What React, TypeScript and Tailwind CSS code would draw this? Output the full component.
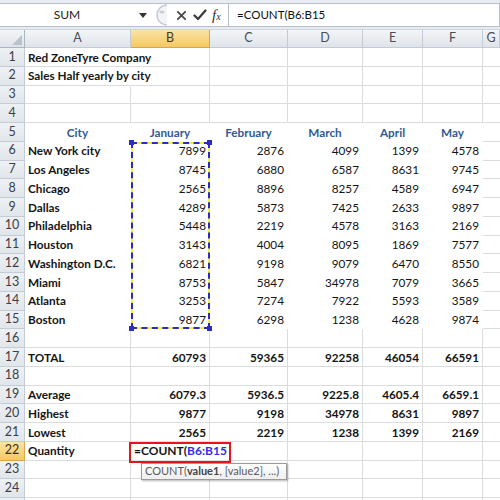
import * as React from 'react';

type Cell = {
  text?: string;
  bold?: boolean;
  align?: 'left' | 'right' | 'center';
  blue?: boolean;
};

const COLS = ['A', 'B', 'C', 'D', 'E', 'F', 'G'];

const cities: [string, number[]][] = [
  ['New York city', [7899, 2876, 4099, 1399, 4578]],
  ['Los Angeles', [8745, 6880, 6587, 8631, 9745]],
  ['Chicago', [2565, 8896, 8257, 4589, 6947]],
  ['Dallas', [4289, 5873, 7425, 2633, 9897]],
  ['Philadelphia', [5448, 2219, 4578, 3163, 2169]],
  ['Houston', [3143, 4004, 8095, 1869, 7577]],
  ['Washington D.C.', [6821, 9198, 9079, 6470, 8550]],
  ['Miami', [8753, 5847, 34978, 7079, 3665]],
  ['Atlanta', [3253, 7274, 7922, 5593, 3589]],
  ['Boston', [9877, 6298, 1238, 4628, 9874]],
];

const boldRow = (label: string, vals: string[]): Cell[] => [
  { text: label, bold: true },
  ...vals.map((v) => ({ text: v, bold: true, align: 'right' as const })),
];

const rows: Cell[][] = [
  [{ text: 'Red ZoneTyre Company', bold: true }],
  [{ text: 'Sales Half yearly by city', bold: true }],
  [],
  [],
  ['City', 'January', 'February', 'March', 'April', 'May'].map((t) => ({
    text: t,
    bold: true,
    align: 'center' as const,
    blue: true,
  })),
  ...cities.map(([city, vals]) => [
    { text: city, bold: true },
    ...vals.map((v) => ({ text: String(v), align: 'right' as const })),
  ]),
  [],
  boldRow('TOTAL', ['60793', '59365', '92258', '46054', '66591']),
  [],
  boldRow('Average', ['6079.3', '5936.5', '9225.8', '4605.4', '6659.1']),
  boldRow('Highest', ['9877', '9198', '34978', '8631', '9897']),
  boldRow('Lowest', ['2565', '2219', '1238', '1399', '2169']),
  [{ text: 'Quantity', bold: true }],
  [],
  [],
  [],
];

const isFilled = (r: number, c: number) => r >= 5 && r <= 15 && c <= 5;

function CrossIcon() {
  return (
    <svg width="11" height="11" viewBox="0 0 12 12">
      <path d="M2 2 L10 10 M10 2 L2 10" stroke="#4a4a4a" strokeWidth="2" strokeLinecap="round" />
    </svg>
  );
}

function CheckIcon() {
  return (
    <svg width="14" height="12" viewBox="0 0 14 12">
      <path d="M1.5 6.5 L5 10 L12.5 1.5" stroke="#3a3a3a" strokeWidth="2.2" fill="none" strokeLinecap="round" strokeLinejoin="round" />
    </svg>
  );
}

function FormulaBar() {
  return (
    <div className="flex h-[30px] bg-[#e8ebef] pt-[3px] pb-[3px] border-b border-[#cfd5dc]">
      <div className="flex h-[24px] w-[150px] items-center bg-white border-y border-[#b7c0ca]">
        <span className="w-[134px] text-center text-[12px] text-[#222]">SUM</span>
        <svg width="8" height="5" viewBox="0 0 8 5" className="ml-[5px]">
          <path d="M0 0 L8 0 L4 5 Z" fill="#333" />
        </svg>
      </div>
      <div className="flex h-[24px] w-[78px] items-center bg-white border-y border-[#b7c0ca]">
        <svg width="18" height="22" viewBox="0 0 18 22" className="ml-[1px]">
          <path d="M16 1 A10 10 0 0 0 16 21" stroke="#c6ccd3" strokeWidth="1.5" fill="#f2f4f6" />
          <ellipse cx="11" cy="8" rx="2.5" ry="1.6" fill="#c9ced5" />
        </svg>
        <span className="ml-[7px] flex"><CrossIcon /></span>
        <span className="ml-[6px] flex"><CheckIcon /></span>
        <span className="ml-[5px] font-['Liberation_Serif'] text-[15px] italic text-[#333] leading-none">
          f<span className="text-[10px]">x</span>
        </span>
      </div>
      <div className="flex h-[24px] flex-1 items-center border border-[#b7c0ca] bg-white pl-[8px] text-[11.5px] text-[#111]">
        =COUNT(B6:B15
      </div>
    </div>
  );
}

export default function App() {
  return (
    <div className="h-[500px] w-[500px] overflow-hidden bg-white font-['Lato','Liberation_Sans',sans-serif]">
      <FormulaBar />
      <div className="relative grid grid-cols-[25px_106px_79px_78px_75px_60px_60px_17px] grid-rows-[18px] auto-rows-[18.75px]">
        {/* corner */}
        <div className="relative border-r border-b border-[#aab5c2] bg-gradient-to-b from-[#f3f5f7] to-[#dfe4ea]">
          <svg width="10" height="10" viewBox="0 0 10 10" className="absolute bottom-[2px] right-[2px]">
            <path d="M10 0 L10 10 L0 10 Z" fill="#b9c1cb" />
          </svg>
        </div>
        {COLS.map((c) => (
          <div
            key={c}
            className={
              c === 'B'
                ? 'flex items-center justify-center border-r border-b border-[#d9a74a] bg-gradient-to-b from-[#fbe3a4] to-[#f4c95f] text-[12.5px] text-[#4a3b22]'
                : 'flex items-center justify-center border-r border-b border-[#c3ccd6] bg-gradient-to-b from-[#f3f5f7] to-[#dfe4ea] text-[12.5px] text-[#4a4f56]'
            }
          >
            {c}
          </div>
        ))}

        {Array.from({ length: 25 }, (_, i) => {
          const r = i + 1;
          const cells = rows[i] ?? [];
          return (
            <React.Fragment key={r}>
              <div
                className={
                  r === 22
                    ? 'flex items-center justify-center border-r border-b border-[#d9a74a] bg-gradient-to-b from-[#fbe3a4] to-[#f4c95f] text-[12.5px] text-[#3a2f1a]'
                    : 'flex items-center justify-center border-r border-b border-[#c3ccd6] bg-gradient-to-b from-[#eef1f4] to-[#e1e6eb] text-[12.5px] text-[#3a3f46]'
                }
              >
                {r}
              </div>
              {[0, 1, 2, 3, 4, 5, 6].map((c) => {
                const cell = cells[c];
                const filled = isFilled(r, c);
                const hideRight = (r <= 2 && c === 0) || (r === 22 && c === 1);
                const cls = [
                  'flex items-center whitespace-nowrap px-[3px] pt-[1px] border-b',
                  c < 6 ? 'border-r' : '',
                  filled ? 'border-white' : 'border-[#dadcdd]',
                  hideRight && !filled ? 'border-r-white' : '',
                  cell?.align === 'right' ? 'justify-end' : cell?.align === 'center' ? 'justify-center' : 'justify-start',
                  cell?.bold ? 'font-bold' : '',
                  cell?.blue ? 'text-[#2f5b94]' : 'text-[#151515]',
                ].join(' ');
                if (r === 22 && c === 1) {
                  return (
                    <div key={c} className={cls + ' text-[12px] font-bold pl-[3px]'}>
                      <span>=COUNT(</span>
                      <span className="text-[#2f2fe0]">B6:B15</span>
                    </div>
                  );
                }
                return (
                  <div key={c} className={cls + ' text-[11.75px]'}>
                    {cell?.text}
                  </div>
                );
              })}
            </React.Fragment>
          );
        })}

        {/* marching ants around B6:B15 */}
        <div className="absolute left-[131px] top-[112px] h-[187px] w-[79px] border-2 border-[#f2ee4c]">
          <div className="absolute -inset-[2px] border-2 border-dashed border-[#2c2cc4]" />
          <div className="absolute -left-[4px] -top-[4px] h-[5px] w-[5px] bg-[#2c2cc4]" />
          <div className="absolute -right-[4px] -top-[4px] h-[5px] w-[5px] bg-[#2c2cc4]" />
          <div className="absolute -left-[4px] -bottom-[4px] h-[5px] w-[5px] bg-[#2c2cc4]" />
          <div className="absolute -right-[4px] -bottom-[4px] h-[5px] w-[5px] bg-[#2c2cc4]" />
        </div>

        {/* red highlight box */}
        <div className="absolute left-[129px] top-[412px] h-[21px] w-[102px] border-2 border-[#e3151f]" />

        {/* function tooltip */}
        <div className="absolute left-[141px] top-[433px] flex h-[17px] w-[146px] items-center whitespace-nowrap border border-[#9a9a9a] bg-gradient-to-b from-white to-[#eeeeee] px-[3px] text-[11px] text-[#5a5a5a] shadow-[1px_1px_2px_rgba(0,0,0,0.3)]">
          COUNT(<span className="font-bold text-[#444]">value1</span>, [value2], ...)
        </div>
      </div>
    </div>
  );
}
